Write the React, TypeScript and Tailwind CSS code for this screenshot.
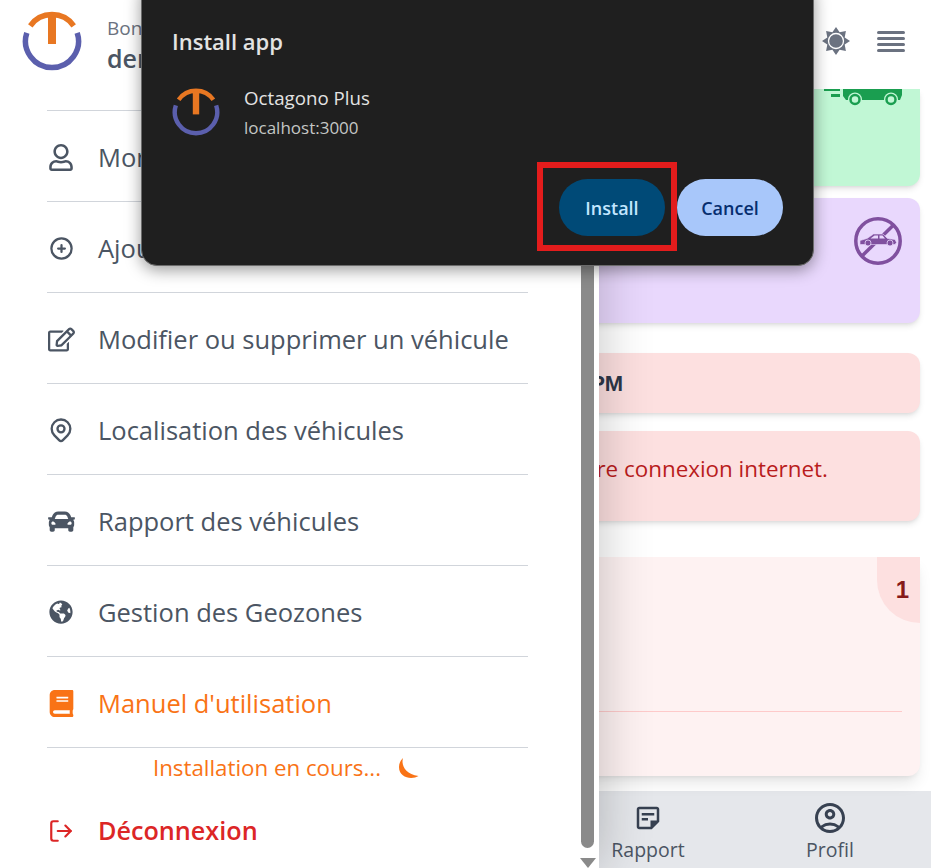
import React from "react";
import { HiOutlinePlusCircle, HiOutlineLocationMarker } from "react-icons/hi";
import { FaRegUser, FaRegEdit, FaCar, FaGlobeAmericas, FaBook } from "react-icons/fa";
import { MdOutlineStickyNote2, MdOutlineAccountCircle } from "react-icons/md";
import { FiLogOut } from "react-icons/fi";

const Logo = ({ className }: { className: string }) => (
  <svg viewBox="0 0 60 60" className={className} fill="none">
    <path d="M8.3 14.8A26.5 26.5 0 0 1 51.7 14.8" stroke="#e87722" strokeWidth="5.5" />
    <path d="M4.8 21.8A26.5 26.5 0 1 0 55.2 21.8" stroke="#5b5fad" strokeWidth="5.5" />
    <rect x="26" y="4" width="8" height="29" fill="#e87722" />
  </svg>
);

const Sun = () => (
  <svg viewBox="0 0 28 28" className="h-[28px] w-[28px]">
    <polygon
      fill="#6b7280"
      points="14,0 17.6,5.300 23.900,4.100 22.700,10.400 28,14 22.700,17.600 23.900,23.900 17.600,22.700 14,28 10.400,22.700 4.100,23.900 5.300,17.600 0,14 5.300,10.400 4.100,4.100 10.400,5.300"
    />
    <circle cx="14" cy="14" r="7.500" fill="#6b7280" stroke="#fff" strokeWidth="1.300" />
    <circle cx="14" cy="14" r="5.500" fill="#6b7280" />
  </svg>
);

const Burger = () => (
  <svg viewBox="0 0 28 21" className="h-[21px] w-[28px]">
    {[0, 6, 12, 18].map((y) => (
      <rect key={y} x="0" y={y} width="28" height="3" rx="1.500" fill="#6b7280" />
    ))}
  </svg>
);

const Truck = () => (
  <svg viewBox="0 0 78 18" className="h-[18px] w-[78px]">
    <rect x="0" y="0" width="16" height="2" fill="#1a9e50" />
    <rect x="7" y="5" width="9" height="3" fill="#1a9e50" />
    <path d="M19 0H78V6L76 11H22L19 7Z" fill="#1a9e50" />
    {[31, 67].map((cx) => (
      <g key={cx}>
        <circle cx={cx} cy="10.500" r="7" fill="#c1f7d5" />
        <circle cx={cx} cy="10.500" r="4.500" fill="#c1f7d5" stroke="#1a9e50" strokeWidth="2.500" />
      </g>
    ))}
  </svg>
);

const NoCar = () => (
  <svg viewBox="0 0 48 48" className="h-[48px] w-[48px]">
    <circle cx="24" cy="24" r="22.200" fill="none" stroke="#80509f" strokeWidth="3.500" />
    <path d="M39 8.500L8.500 38.500" stroke="#80509f" strokeWidth="3.500" />
    <path
      d="M6 27V23.500L13 21.500L19.500 17H29L33.500 21.500L41 22.500L42.500 25.500L41 27.500H6Z"
      fill="#80509f"
      stroke="#e9d8fd"
      strokeWidth="0.600"
    />
    <path d="M20.500 18.500H24V21.500H16.500ZM25.500 18.500H28.500L31 21.500H25.500Z" fill="#e9d8fd" />
    <circle cx="14" cy="26" r="3" fill="#80509f" stroke="#e9d8fd" strokeWidth="0.800" />
    <circle cx="36" cy="26" r="3" fill="#80509f" stroke="#e9d8fd" strokeWidth="0.800" />
  </svg>
);

const rows = [
  { icon: <FaRegUser className="h-[27px] w-[24px]" />, label: "Mon profil" },
  { icon: <HiOutlinePlusCircle className="h-[27px] w-[27px]" />, label: "Ajouter un véhicule" },
  { icon: <FaRegEdit className="h-[27px] w-[27px]" />, label: "Modifier ou supprimer un véhicule" },
  { icon: <HiOutlineLocationMarker className="h-[28px] w-[28px]" />, label: "Localisation des véhicules" },
  { icon: <FaCar className="h-[27px] w-[27px]" />, label: "Rapport des véhicules" },
  { icon: <FaGlobeAmericas className="h-[24px] w-[24px]" />, label: "Gestion des Geozones" },
];

export default function App() {
  return (
    <div className="relative h-[868px] w-[931px] overflow-hidden bg-white font-['Open_Sans',sans-serif]">
      {/* Page behind the drawer */}
      <div className="flex h-full flex-col">
        <header className="relative z-10 flex h-[89px] shrink-0 items-center justify-end gap-[27px] bg-white pb-[7px] pr-[26px]">
          <Sun />
          <Burger />
        </header>
        <main className="flex flex-1 flex-col px-[11px]">
          <div className="flex h-[97px] shrink-0 justify-end overflow-hidden rounded-b-xl bg-[#c1f7d5] pr-[18px] shadow-md">
            <Truck />
          </div>
          <div className="mt-[12px] flex h-[125px] shrink-0 justify-end rounded-xl bg-[#e9d8fd] pr-[18px] pt-[19px] shadow-md">
            <NoCar />
          </div>
          <div className="mt-[30px] flex h-[60px] shrink-0 items-center rounded-xl bg-[#fde0e0] pl-[549px] font-['Liberation_Sans',sans-serif] text-[22px] font-bold text-[#2d3748] shadow-md">
            <span className="-ml-[20px]">8:45 PM</span>
          </div>
          <div className="mt-[18px] h-[90px] shrink-0 rounded-xl bg-[#fde0e0] pt-[23px] text-[22.400px] leading-[30px] text-[#b91c1c] shadow-md">
            <div className="whitespace-nowrap pl-[470px]">Vérifiez votre connexion internet.</div>
          </div>
          <div className="relative mt-[36px] flex h-[219px] shrink-0 flex-col justify-end rounded-b-xl bg-[#fef2f2] px-[18px] pb-[64px] shadow-lg">
            <div className="absolute right-0 top-0 flex h-[66px] w-[43px] items-center justify-center rounded-bl-[44px] bg-[#fde0e0] pl-[8px] font-['Liberation_Sans',sans-serif] text-[24px] font-bold text-[#861a1a]">
              1
            </div>
            <div className="h-px bg-[#fecaca]" />
          </div>
        </main>
        <nav className="mt-[15px] flex h-[77px] shrink-0 justify-end bg-[#e5e7eb] pr-[10px] text-[#4b5563]">
          {[
            { label: "Rapport", icon: <MdOutlineStickyNote2 className="h-[30px] w-[30px]" /> },
            { label: "Profil", icon: <MdOutlineAccountCircle className="h-[36px] w-[36px]" /> },
          ].map((n) => (
            <div key={n.label} className="flex w-[182px] flex-col items-center justify-end pb-[4px] text-[19.500px] leading-[28px]">
              <span className="flex h-[36px] items-center text-[#374151]">{n.icon}</span>
              <span>{n.label}</span>
            </div>
          ))}
        </nav>
      </div>

      {/* Drawer */}
      <aside className="absolute left-0 top-0 z-20 flex h-full w-[599px] bg-white shadow-[0_0_50px_rgba(0,0,0,0.24)]">
        <div className="flex w-[581px] flex-col pl-[47px] pr-[53px]">
          <div className="-ml-[25px] flex h-[110px] shrink-0 items-start gap-[25px] pt-[11px]">
            <Logo className="h-[60px] w-[60px] shrink-0" />
            <div className="pt-[3px]">
              <div className="text-[19px] leading-[28px] text-[#6b7280]">Bonjour</div>
              <div className="text-[25px] font-semibold leading-[33px] text-[#4b5563]">demo</div>
            </div>
          </div>
          {rows.map((r) => (
            <div key={r.label} className="flex h-[91px] shrink-0 items-center border-t border-[#d1d5db] pt-[2px] text-[#4b5563]">
              <span className="flex w-[28px] justify-center">{r.icon}</span>
              <span className="ml-[23px] whitespace-nowrap text-[25.500px]">{r.label}</span>
            </div>
          ))}
          <div className="flex h-[92px] shrink-0 items-center border-y border-[#d1d5db] pt-[2px] text-[#f97316]">
            <span className="flex w-[28px] justify-center">
              <FaBook className="h-[27px] w-[27px]" />
            </span>
            <span className="ml-[23px] whitespace-nowrap text-[25.500px]">Manuel d'utilisation</span>
          </div>
          <div className="flex h-[40px] shrink-0 items-center justify-center gap-[18px] pr-[3px] text-[22.300px] text-[#f97316]">
            <span>Installation en cours...</span>
            <svg viewBox="0 0 20 20" className="h-[20px] w-[20px]">
              <path d="M4 0C2 7 6 16 19.500 18C13 22 0 20 0 9C0 5 2 2 4 0Z" fill="#f97316" />
            </svg>
          </div>
          <div className="flex flex-1 items-center pt-[6px] text-[#dc2626]">
            <span className="flex w-[28px] justify-center">
              <FiLogOut className="h-[26px] w-[26px]" />
            </span>
            <span className="ml-[23px] text-[25.200px] font-semibold">Déconnexion</span>
          </div>
        </div>
        <div className="flex w-[13px] flex-col items-center">
          <div className="h-[848px] w-[13px] shrink-0 rounded-b-lg bg-[#8a8a8a]" />
          <div className="mt-[10px] h-0 w-0 border-x-[8px] border-t-[10px] border-x-transparent border-t-[#8a8a8a]" />
        </div>
      </aside>

      {/* Install dialog */}
      <div className="absolute left-[141px] top-[-20px] z-30 h-[286px] w-[673px] rounded-[16px] border border-[#6b6b6b] bg-[#1f1f1f] pl-[30px] pt-[42px] shadow-[0_4px_16px_rgba(0,0,0,0.4)]">
        <div className="text-[22px] font-semibold leading-[36px] text-[#e3e3e3]">Install app</div>
        <div className="mt-[29px] flex gap-[24px]">
          <Logo className="h-[48px] w-[48px] shrink-0" />
          <div className="-mt-[5px]">
            <div className="text-[18.700px] leading-[30px] text-[#e3e3e3]">Octagono Plus</div>
            <div className="mt-[1px] text-[17px] leading-[28px] text-[#c4c7c5]">localhost:3000</div>
          </div>
        </div>
        <div className="absolute right-[30px] top-[198px] flex gap-[12px] text-[18px] font-semibold">
          <button className="h-[57px] w-[106px] rounded-full bg-[#004a77] pt-[1px] text-[#c2e7ff]">Install</button>
          <button className="h-[57px] w-[106px] rounded-full bg-[#a8c7fa] pt-[1px] text-[#062e6f]">Cancel</button>
        </div>
        <div className="absolute left-[395px] top-[181px] h-[89px] w-[140px] border-[6px] border-[#e31c1c]" />
      </div>
    </div>
  );
}
